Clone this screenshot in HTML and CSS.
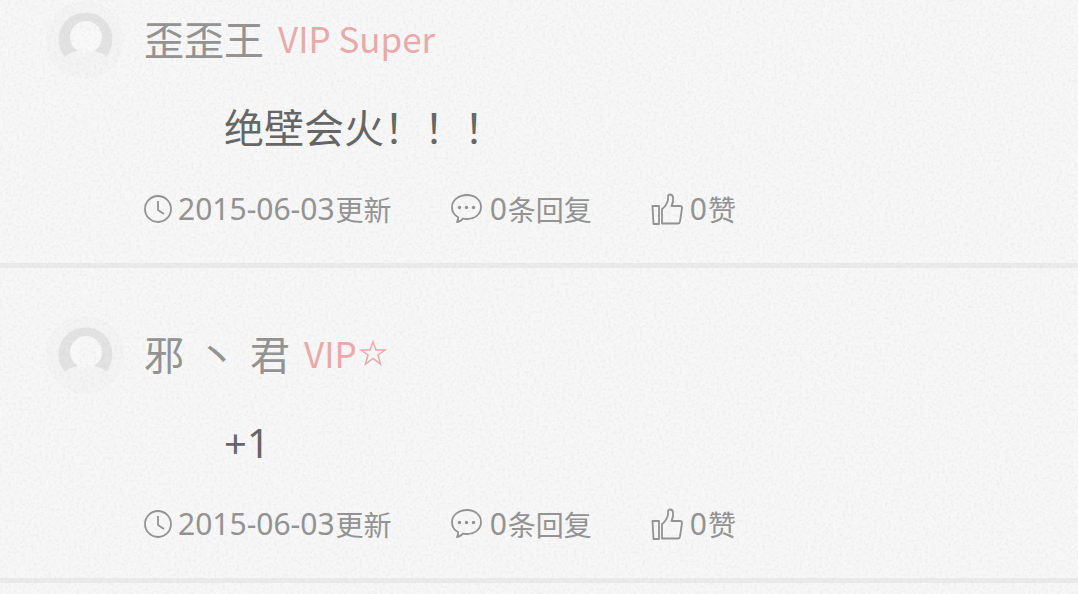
FILE: index.html
```html
<!DOCTYPE html>
<html lang="zh-CN">
<head>
<meta charset="utf-8">
<meta name="viewport" content="width=device-width, initial-scale=1">
<title>评论</title>
<link rel="stylesheet" href="styles.css">
</head>
<body>
<svg class="sprite" aria-hidden="true">
  <symbol id="avatar" viewBox="0 0 80 80">
    <circle cx="41" cy="40" r="39" fill="#f4f4f4"/>
    <path d="M21 57A27 27 0 1 1 62 57C59 53 55 52 50 51H33C28 52 24 54 21 57Z" fill="#e3e3e3"/>
    <ellipse cx="42" cy="37" rx="16" ry="16" fill="#f8f8f8"/>
  </symbol>
  <symbol id="clock" viewBox="0 0 28 28">
    <circle cx="14" cy="14" r="13"/><path d="M14 6V15L20 19"/>
  </symbol>
  <symbol id="comment" viewBox="0 0 32 32">
    <path d="M7 24C3 22 1 18 1 14C1 7 8 2 16 2C24 2 30 7 30 14C30 21 24 26 16 26C14 26 13 26 12 25.5C10 27.500 8 29 6 29C7 27.500 7.500 26 7 24Z"/>
    <g class="dots"><circle cx="8.500" cy="14.500" r="1.700"/><circle cx="15.500" cy="14.500" r="1.700"/><circle cx="22.500" cy="14.500" r="1.700"/></g>
  </symbol>
  <symbol id="thumb" viewBox="0 0 32 32">
    <path d="M1.500 13H8V31H2.500Z"/>
    <path d="M11 30.500V16C14 14 16 10.500 17 7V3.500C17 1 21 .5 22 4C22.500 7 22 10 20.500 13H29C30.500 13 31 14 31 15L29 28.500C28.700 30 28 30.500 27 30.500Z"/>
  </symbol>
</svg>
<main class="comments">
  <article class="comment">
    <header class="author">
      <svg class="avatar" aria-hidden="true"><use href="#avatar"/></svg>
      <h2 class="name">歪歪王</h2>
      <span class="badge">VIP Super</span>
    </header>
    <p class="message">绝壁会火！！！</p>
    <footer class="meta">
      <span class="item time"><svg class="icon icon-clock" aria-hidden="true"><use href="#clock"/></svg><time datetime="2015-06-03">2015-06-03</time>更新</span>
      <button class="item reply" type="button"><svg class="icon" aria-hidden="true"><use href="#comment"/></svg><span class="num">0</span>条回复</button>
      <button class="item" type="button"><svg class="icon" aria-hidden="true"><use href="#thumb"/></svg><span class="num">0</span>赞</button>
    </footer>
  </article>
  <article class="comment">
    <header class="author">
      <svg class="avatar" aria-hidden="true"><use href="#avatar"/></svg>
      <h2 class="name spaced"><span>邪</span><span>丶</span><span>君</span></h2>
      <span class="badge">VIP<svg class="star" viewBox="0 0 28 28" aria-hidden="true"><path d="M14 3L17 11H26L19 16L21.500 25L14 19.500L6.500 25L9 16L2 11H11Z"/></svg></span>
    </header>
    <p class="message">+1</p>
    <footer class="meta">
      <span class="item time"><svg class="icon icon-clock" aria-hidden="true"><use href="#clock"/></svg><time datetime="2015-06-03">2015-06-03</time>更新</span>
      <button class="item reply" type="button"><svg class="icon" aria-hidden="true"><use href="#comment"/></svg><span class="num">0</span>条回复</button>
      <button class="item" type="button"><svg class="icon" aria-hidden="true"><use href="#thumb"/></svg><span class="num">0</span>赞</button>
    </footer>
  </article>
</main>
<svg class="paper" aria-hidden="true">
  <filter id="grain" x="0" y="0" width="100%" height="100%">
    <feTurbulence type="fractalNoise" baseFrequency=".35" numOctaves="3" seed="4"/>
    <feColorMatrix values="0 0 0 0 .45  0 0 0 0 .45  0 0 0 0 .45  .28 0 0 0 -.12"/>
  </filter>
  <rect width="100%" height="100%" filter="url(#grain)"/>
</svg>
</body>
</html>
```

FILE: styles.css
```css
* { box-sizing: border-box; }

body {
  margin: 0;
  min-height: 100vh;
  background: #f7f7f7;
  color: #929292;
  font-family: "Noto Sans CJK SC", sans-serif;
}

.sprite {
  display: block;
  width: 0;
  height: 0;
}

.paper {
  position: fixed;
  inset: 0;
  width: 100%;
  height: 100%;
  pointer-events: none;
}

.comment {
  padding: 47px 44px 34px;
  border-bottom: 5px solid #ebebeb;
}

.comment:first-child { padding-top: 0; }

.author {
  display: flex;
  align-items: center;
}

.avatar {
  width: 80px;
  height: 80px;
  margin-right: 20px;
}

.name {
  margin: 0 14px 0 0;
  padding-bottom: 4px;
  font-size: 40px;
  font-weight: 400;
  line-height: 60px;
}

.spaced {
  display: flex;
  gap: 13px;
}

.badge {
  display: flex;
  align-items: center;
  padding-bottom: 4px;
  color: #eba9aa;
  font-size: 35px;
  line-height: 60px;
}

.star {
  width: 28px;
  height: 28px;
  margin-left: 2px;
  fill: none;
  stroke: currentColor;
  stroke-width: 1.5;
}

.message {
  margin: 18px 0 31px 180px;
  color: #646464;
  font-family: "Noto Sans", "Noto Sans CJK SC", sans-serif;
  font-size: 40px;
  line-height: 60px;
}

.meta {
  display: flex;
  gap: 59px;
  padding-left: 100px;
}

.item {
  display: flex;
  align-items: center;
  padding: 0;
  border: 0;
  background: none;
  color: inherit;
  font-family: inherit;
  font-size: 28px;
  line-height: 40px;
}

.item time,
.num {
  margin-right: 1px;
  font-family: "Noto Sans", sans-serif;
  font-size: 30px;
}

.icon {
  width: 32px;
  height: 32px;
  margin-right: 7px;
  fill: none;
  stroke: currentColor;
  stroke-width: 1.8;
  stroke-linejoin: round;
}

.icon-clock {
  width: 28px;
  height: 28px;
  margin-right: 6px;
}

.dots {
  fill: currentColor;
  stroke: none;
}
```
